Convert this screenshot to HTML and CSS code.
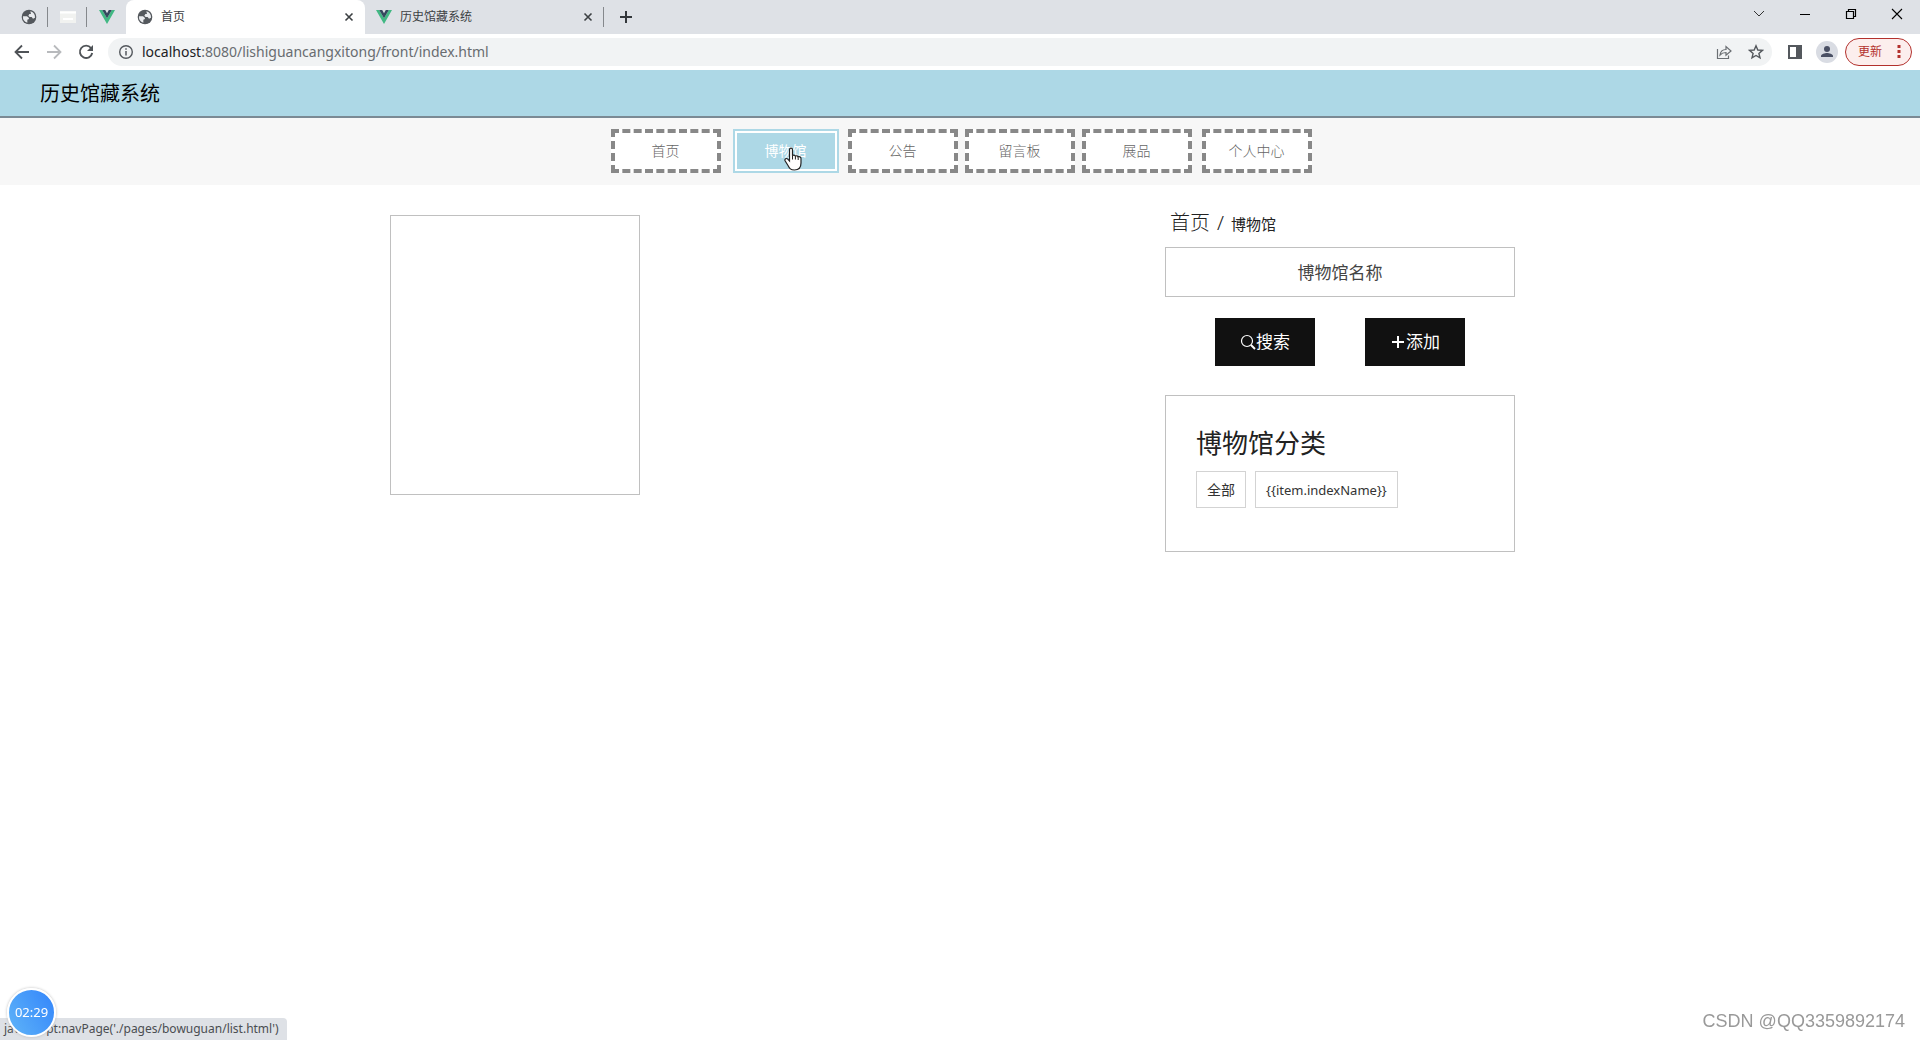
FILE: index.html
```html
<!DOCTYPE html>
<html lang="zh-CN">
<head>
<meta charset="utf-8">
<title>首页</title>
<link rel="stylesheet" href="styles.css">
</head>
<body>
<svg class="defs" aria-hidden="true">
  <symbol id="globe" viewBox="0 0 24 24"><path fill="#54585d" d="M12 1a11 11 0 1 0 0 22 11 11 0 0 0 0-22z"/><path fill="#e9ebee" d="M3 11h6l3 2.500c0 1.500-1 2.500-2.500 2.500V20.500A9 9 0 0 1 3 11zM14 3.300a9 9 0 0 1 7 9.700l-3 1.500-2-2.500h-3l-2-2 1.500-2.500H15z"/></symbol>
  <symbol id="vue" viewBox="0 0 16 14"><path fill="#41b883" d="M0 0h3.200L8 8.300 12.800 0H16L8 14z"/><path fill="#35495e" d="M3.200 0h3L8 3.200 9.800 0h3L8 8.300z"/></symbol>
  <symbol id="close" viewBox="0 0 10 10"><path d="M1.500 1.500l7 7m0-7l-7 7" stroke="#3c4043" stroke-width="1.600"/></symbol>
</svg>

<div class="tabstrip">
  <div class="pinned divided"><svg class="i16"><use href="#globe"/></svg></div>
  <div class="pinned divided"><svg class="i16" viewBox="0 0 16 16"><rect x="0" y="2" width="16" height="12" fill="#f1f2f0"/><path d="M0 3.500h16M3 10h10" stroke="#fff" stroke-width="2"/></svg></div>
  <div class="pinned"><svg class="vue"><use href="#vue"/></svg></div>
  <div class="tab active">
    <svg class="i16"><use href="#globe"/></svg><span class="tab-title">首页</span>
    <button class="icon-btn" aria-label="关闭"><svg class="i10"><use href="#close"/></svg></button>
  </div>
  <div class="tab">
    <svg class="vue"><use href="#vue"/></svg><span class="tab-title">历史馆藏系统</span>
    <button class="icon-btn" aria-label="关闭"><svg class="i10"><use href="#close"/></svg></button>
  </div>
  <button class="icon-btn new-tab" aria-label="新标签页"><svg class="i12" viewBox="0 0 12 12"><path d="M6 0v12M0 6h12" stroke="#33373b" stroke-width="2"/></svg></button>
  <div class="window-controls">
    <button class="icon-btn" aria-label="搜索标签页"><svg class="i12" viewBox="0 0 12 12"><path d="M1 3l5 5 5-5" fill="none" stroke="#333"/></svg></button>
    <button class="icon-btn" aria-label="最小化"><svg class="i12" viewBox="0 0 12 12"><path d="M1 6.500h10" stroke="#000"/></svg></button>
    <button class="icon-btn" aria-label="还原"><svg class="i12" viewBox="0 0 12 12"><path d="M1.500 3.500h7v7h-7zM3.500 3.500v-2h7v7h-2" fill="none" stroke="#000" stroke-width="1.200"/></svg></button>
    <button class="icon-btn" aria-label="关闭窗口"><svg class="i12" viewBox="0 0 12 12"><path d="M1 1l10 10M11 1L1 11" stroke="#000" stroke-width="1.100"/></svg></button>
  </div>
</div>

<div class="toolbar">
  <button class="icon-btn" aria-label="后退"><svg class="i16" viewBox="0 0 16 16"><path d="M15 8H2M8 1.500L1.500 8 8 14.500" fill="none" stroke="#4f5357" stroke-width="1.800"/></svg></button>
  <button class="icon-btn" aria-label="前进"><svg class="i16" viewBox="0 0 16 16"><path d="M1 8h13M8 1.500L14.500 8 8 14.500" fill="none" stroke="#b8babd" stroke-width="1.800"/></svg></button>
  <button class="icon-btn" aria-label="刷新"><svg class="i16" viewBox="0 0 16 16"><path d="M13 4A6.200 6.200 0 1 0 14.200 9" fill="none" stroke="#4f5357" stroke-width="1.900"/><path d="M15 1v6H9z" fill="#4f5357"/></svg></button>
  <div class="omnibox">
    <svg class="i16" viewBox="0 0 16 16"><circle cx="8" cy="8" r="6.300" fill="none" stroke="#54585d" stroke-width="1.400"/><path d="M8 7v4.500M8 4.200v1.600" stroke="#54585d" stroke-width="1.500"/></svg>
    <span class="url">localhost<span class="path">:8080/lishiguancangxitong/front/index.html</span></span>
    <button class="icon-btn" aria-label="分享"><svg class="i16" viewBox="0 0 16 16"><path d="M1.500 5v9.500h11v-3M4 11c.5-4 3-5.500 6-5.500V2.500L15 7l-5 4.300V8.500c-3 0-4.500.8-6 2.500z" fill="none" stroke="#6b6f73" stroke-width="1.200"/></svg></button>
    <button class="icon-btn" aria-label="收藏"><svg class="i16" viewBox="0 0 16 16"><path d="M8 1.800l1.800 4.200 4.600.4-3.500 3 1.100 4.500L8 11.500l-4 2.400 1.100-4.500-3.500-3L6.200 6z" fill="none" stroke="#54585d" stroke-width="1.400"/></svg></button>
  </div>
  <button class="icon-btn" aria-label="侧边栏"><svg class="i16" viewBox="0 0 16 16"><path fill="#54585d" d="M1 1h14v14H1zM3 3v10h6V3z" fill-rule="evenodd"/></svg></button>
  <button class="icon-btn" aria-label="用户"><svg class="i22" viewBox="0 0 22 22"><circle cx="11" cy="11" r="11" fill="#d9dce3"/><circle cx="11" cy="8" r="3" fill="#4a5064"/><path d="M5 16v-1c0-2 4-3 6-3s6 1 6 3v1z" fill="#4a5064"/></svg></button>
  <button class="update">更新<svg class="dots" viewBox="0 0 4 14"><path fill="#b3312d" d="M.5 0h3v3h-3zM.5 5h3v3h-3zM.5 10h3v3h-3z"/></svg></button>
</div>

<header class="site-header"><h1>历史馆藏系统</h1></header>
<nav class="site-nav">
  <a href="#home">首页</a>
  <a href="#museum" class="current">博物馆<svg class="pointer" viewBox="0 0 18 24"><path d="M5.500 14V2.800c0-2.300 3-2.300 3 0v6c.5-1 2.500-1 2.900.4.700-.8 2.400-.5 2.700.8 1-.7 2.900-.2 2.900 1.500v4.500c0 4.500-2 7-6.500 7-4 0-5-1.500-6.500-4.500L1.200 14c-1-2 1.300-3.300 2.600-1.800z" fill="#fff" stroke="#222" stroke-width="1.200"/><path d="M8.500 8.500v4M11.400 9.500v3M14.200 10.500v2.500" stroke="#222"/></svg></a>
  <a href="#notice">公告</a>
  <a href="#board">留言板</a>
  <a href="#exhibits">展品</a>
  <a href="#me" class="member">个人中心</a>
</nav>

<main class="content">
  <section class="item-card" aria-label="博物馆"></section>
  <aside class="sidebar">
    <div class="breadcrumb"><a href="#home">首页</a><span>/</span><small>博物馆</small></div>
    <form class="search">
      <input type="text" placeholder="博物馆名称" aria-label="博物馆名称">
      <div class="actions">
        <button type="button"><svg class="i16" viewBox="0 0 16 16"><circle cx="7" cy="7" r="5.500" fill="none" stroke="#fff" stroke-width="1.200"/><path d="M11 11l4 4" stroke="#fff" stroke-width="2"/></svg>搜索</button>
        <button type="button"><svg class="i16" viewBox="0 0 16 16"><path d="M8 2v12M2 8h12" stroke="#fff" stroke-width="2"/></svg>添加</button>
      </div>
    </form>
    <section class="categories">
      <h2>博物馆分类</h2>
      <div class="tags"><a href="#all">全部</a><a href="#item" class="latin">{{item.indexName}}</a></div>
    </section>
  </aside>
</main>

<div class="status">javascript:navPage('./pages/bowuguan/list.html')</div>
<div class="timer">02:29</div>
<div class="watermark">CSDN @QQ3359892174</div>
</body>
</html>
```
FILE: styles.css
```css
* { box-sizing: border-box; }
body {
  margin: 0;
  min-height: 100vh;
  background: #fff;
  color: #333;
  font: 14px/20px "Noto Sans", "Noto Sans CJK SC", sans-serif;
}
a { color: inherit; text-decoration: none; }
button, input { font: inherit; }
svg { display: block; flex: none; }
.defs { position: absolute; width: 0; height: 0; }
.i10 { width: 10px; height: 10px; }
.i12 { width: 12px; height: 12px; }
.i16 { width: 16px; height: 16px; }
.i22 { width: 22px; height: 22px; }
.vue { width: 16px; height: 14px; }
.icon-btn {
  display: flex;
  align-items: center;
  justify-content: center;
  padding: 0;
  border: 0;
  background: none;
}

/* browser frame */
.tabstrip {
  display: flex;
  height: 34px;
  padding-left: 9px;
  background: #dee1e6;
}
.pinned {
  display: flex;
  align-items: center;
  justify-content: center;
  width: 39px;
}
.divided, .tab:not(.active) {
  background: linear-gradient(#85888c, #85888c) right center / 1px 20px no-repeat;
}
.tab {
  display: flex;
  align-items: center;
  gap: 8px;
  width: 239px;
  padding: 0 11px;
  font-size: 12px;
  color: #3c4043;
}
.tab.active { background: #fff; border-radius: 8px 8px 0 0; }
.tab-title { flex: 1; }
.new-tab { width: 44px; }
.window-controls {
  display: flex;
  height: 28px;
  margin-left: auto;
}
.window-controls .icon-btn { width: 46px; }
.toolbar {
  display: flex;
  align-items: center;
  height: 36px;
  padding: 0 8px 0 6px;
  background: #fff;
}
.toolbar > .icon-btn { width: 32px; height: 32px; }
.omnibox {
  display: flex;
  flex: 1;
  align-items: center;
  gap: 8px;
  height: 28px;
  margin: 0 7px 0 6px;
  padding: 0 4px 0 10px;
  border-radius: 14px;
  background: #f1f3f4;
}
.omnibox .icon-btn { width: 24px; }
.url { flex: 1; color: #202124; }
.path { color: #686c70; }
.update {
  display: flex;
  align-items: center;
  gap: 15px;
  height: 28px;
  margin-left: 2px;
  padding: 0 10px 0 12px;
  border: 1px solid #b3312d;
  border-radius: 14px;
  background: #fceeed;
  color: #b3312d;
  font-size: 12px;
}
.dots { width: 4px; height: 14px; }

/* site header */
.site-header {
  height: 48px;
  padding: 1px 40px 0;
  border-bottom: 2px solid #7b8a94;
  background: #add8e6;
  color: #000;
}
h1 { margin: 0; font-size: 20px; font-weight: 400; line-height: 46px; }
.site-nav {
  display: flex;
  justify-content: center;
  gap: 7px;
  padding: 11px 0 12px 2px;
  background: #f7f7f7;
}
.site-nav a {
  width: 110px;
  height: 44px;
  border: 4px dashed #888;
  background: #fff;
  color: #666;
  font-weight: 300;
  line-height: 36px;
  text-align: center;
}
.site-nav .current {
  position: relative;
  width: 106px;
  margin: 0 2px 0 5px;
  border: 2px solid #add8e6;
  background: #add8e6;
  box-shadow: inset 0 0 0 2px #fff;
  color: #fff;
  font-weight: 400;
  line-height: 40px;
}
.site-nav .member { margin-left: 3px; }
.pointer {
  position: absolute;
  top: 16px;
  left: 49px;
  width: 18px;
  height: 24px;
}

/* page content */
.content {
  display: flex;
  align-items: flex-start;
  justify-content: space-between;
  max-width: 1140px;
  margin: 0 auto;
  padding: 24px 15px 0 0;
}
.item-card { width: 250px; height: 280px; margin-top: 6px; border: 1px solid #c0c0c0; }
.sidebar { width: 350px; }
.breadcrumb {
  display: flex;
  align-items: baseline;
  gap: 7px;
  padding: 0 5px;
  color: #222;
  font-size: 20px;
  font-weight: 300;
  line-height: 28px;
}
.breadcrumb small { font-size: 15px; font-weight: 400; }
.search input {
  display: block;
  width: 100%;
  height: 50px;
  margin-top: 9px;
  padding: 0 16px;
  border: 1px solid #c0c0c0;
  font-size: 17px;
  text-align: center;
}
.search input::placeholder { color: #444; }
.actions { display: flex; justify-content: center; gap: 50px; margin: 21px 0 29px; }
.actions button {
  display: flex;
  align-items: center;
  justify-content: center;
  width: 100px;
  height: 48px;
  padding: 0;
  border: 0;
  background: #111;
  color: #fff;
  font-size: 17px;
}
.categories { padding: 30px 30px 43px; border: 1px solid #c0c0c0; }
h2 { margin: 0 0 10px; font-size: 26px; font-weight: 400; line-height: 35px; color: #222; }
.tags { display: flex; flex-wrap: wrap; gap: 9px; }
.tags a { padding: 8px 10px 7px; border: 1px solid #d3d3d3; }
.tags .latin { font-size: 13px; }

/* overlays */
.status {
  position: fixed;
  bottom: 0;
  left: 0;
  padding: 1px 8px 1px 4px;
  border-radius: 0 4px 0 0;
  background: #dee1e6;
  color: #4a4d51;
  font-size: 12px;
}
.timer {
  position: fixed;
  bottom: 3px;
  left: 7px;
  width: 49px;
  height: 49px;
  border: 2px solid #fff;
  border-radius: 50%;
  background: linear-gradient(60deg, #5fb4f8, #3385fb);
  box-shadow: 0 0 3px #bbb;
  color: #fff;
  font-size: 13px;
  line-height: 45px;
  text-align: center;
}
.watermark {
  position: fixed;
  right: 15px;
  bottom: 8px;
  color: #999;
  font: 18px/22px "Liberation Sans", sans-serif;
}
```
